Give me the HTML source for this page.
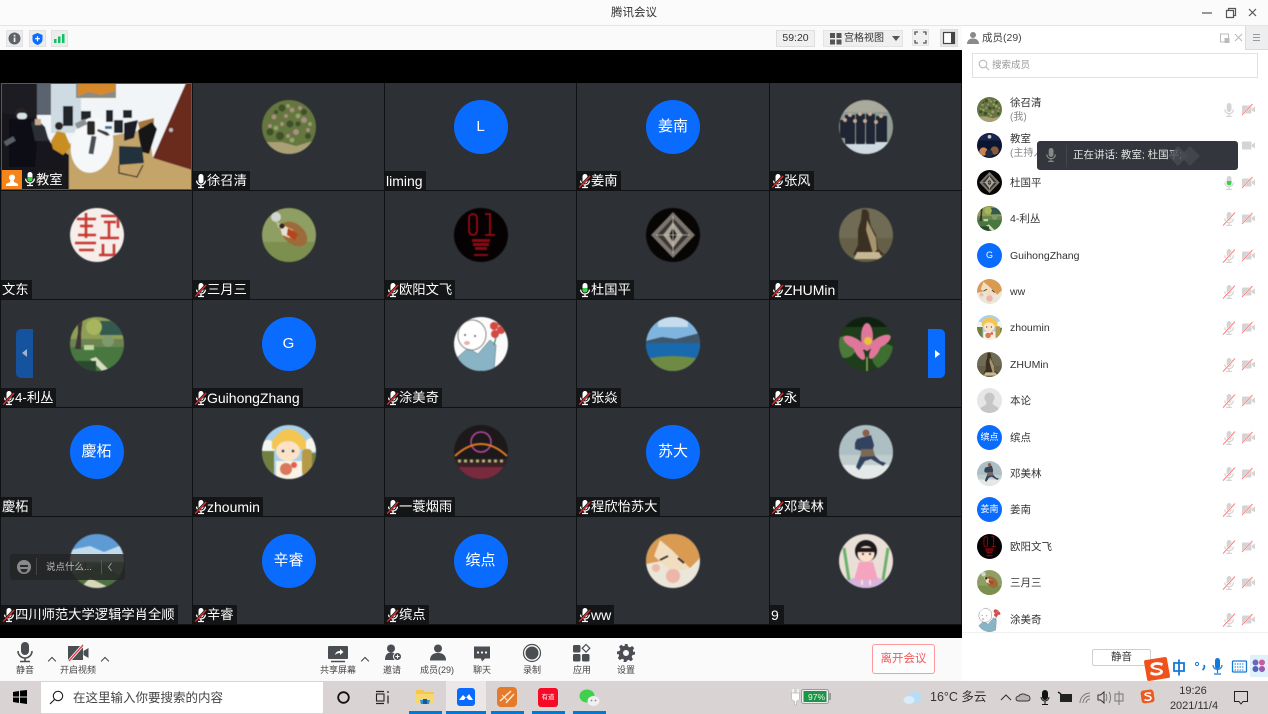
<!DOCTYPE html>
<html lang="zh"><head><meta charset="utf-8"><title>腾讯会议</title>
<style>
*{box-sizing:border-box;margin:0;padding:0}
html,body{width:1268px;height:714px;overflow:hidden;background:#fff}
body{position:relative;font-family:"Liberation Sans","Noto Sans CJK SC",sans-serif;color:#333}
.abs,.c,.l,.av,.t,.r,.pav,.ic{position:absolute}
.c{background:#2d3034;overflow:hidden}
.av{width:54px;height:54px;border-radius:50%;overflow:hidden;left:50%;margin-left:-27px;top:17px;display:block}
svg.av{filter:blur(.4px)}
svg.pav{filter:blur(.25px)}
.bl{background:#0a6cff;color:#fff;font-size:15px;line-height:54px;text-align:center}
.l{left:0;bottom:0;height:19px;background:#141517;color:#fff;font-size:13.3px;line-height:20px;white-space:nowrap;padding:0 3px 0 14px}
.l.e{font-size:14px}
.l.n{padding-left:1px}
.l svg{position:absolute;left:1px;top:2px;width:14px;height:16px}
.t{text-align:center;font-size:9px;color:#444;white-space:nowrap;line-height:12px;top:664px;width:60px}
.chev{position:absolute;width:6px;height:6px;border-left:1.3px solid #444;border-top:1.3px solid #444;transform:rotate(45deg);top:658px}
.r{left:962px;width:306px;height:36px}
.pav{left:15px;top:6px;width:25px;height:25px;border-radius:50%;overflow:hidden;display:block}
.pbl{background:#0a6cff;color:#fff;font-size:9px;line-height:25px;text-align:center}
.nm{position:absolute;left:48px;top:12px;font-size:10.5px;line-height:14px;color:#333;white-space:nowrap}
.sub{position:absolute;left:48px;top:20px;font-size:10px;line-height:14px;color:#888;white-space:nowrap}
.ic{width:14px;height:16px}
.pm{left:260px;top:11px}.pc{left:279px;top:12px;width:15px;height:13px}
.und{position:absolute;top:711px;height:3px;background:#0078d4}
</style></head><body>
<svg width="0" height="0" style="position:absolute">
<defs>
<symbol id="m" viewBox="0 0 14 16"><rect x="4.5" y="1" width="5" height="9.5" rx="2.5" fill="#fff"/><path d="M2.6 7.6a4.4 4.4 0 0 0 8.8 0M7 12v2.2M4 14.5h6" stroke="#fff" stroke-width="1.3" fill="none"/><path d="M1 14.5L12.5 2.5" stroke="#141517" stroke-width="2.4"/><path d="M1.2 14.5L12.2 3" stroke="#e02b2b" stroke-width="1.3"/></symbol>
<symbol id="mg" viewBox="0 0 14 16"><rect x="4.5" y="1" width="5" height="9.5" rx="2.5" fill="#fff"/><path d="M4.5 6h5v2a2.5 2.5 0 0 1-5 0z" fill="#3bd24a"/><path d="M2.6 7.6a4.4 4.4 0 0 0 8.8 0M7 12v2.2M4 14.5h6" stroke="#fff" stroke-width="1.3" fill="none"/></symbol>
<symbol id="mw" viewBox="0 0 14 16"><rect x="4.5" y="1" width="5" height="9.5" rx="2.5" fill="#fff"/><path d="M2.6 7.6a4.4 4.4 0 0 0 8.8 0M7 12v2.2M4 14.5h6" stroke="#fff" stroke-width="1.3" fill="none"/></symbol>
<symbol id="pm" viewBox="0 0 14 16"><rect x="4.7" y="1" width="4.8" height="9" rx="2.4" fill="#d4d4d4"/><path d="M2.8 7.4a4.3 4.3 0 0 0 8.6 0M7 12v2M4.2 14.4h5.6" stroke="#d4d4d4" stroke-width="1.2" fill="none"/><path d="M1 14.6L13 1.5" stroke="#fff" stroke-width="2"/><path d="M1 14.6L13 1.5" stroke="#ff7f7f" stroke-width="1"/></symbol>
<symbol id="pm0" viewBox="0 0 14 16"><rect x="4.7" y="1" width="4.8" height="9" rx="2.4" fill="#d4d4d4"/><path d="M2.8 7.4a4.3 4.3 0 0 0 8.6 0M7 12v2M4.2 14.4h5.6" stroke="#d4d4d4" stroke-width="1.2" fill="none"/></symbol>
<symbol id="pmg" viewBox="0 0 14 16"><rect x="4.7" y="1" width="4.8" height="9" rx="2.4" fill="#d4d4d4"/><path d="M4.7 6h4.8v2a2.4 2.4 0 0 1-4.8 0z" fill="#3cd04a"/><path d="M2.8 7.4a4.3 4.3 0 0 0 8.6 0M7 12v2M4.2 14.4h5.6" stroke="#d4d4d4" stroke-width="1.2" fill="none"/></symbol>
<symbol id="pc" viewBox="0 0 15 13"><rect x="1" y="2.5" width="9.5" height="8" rx="1" fill="#d4d4d4"/><path d="M11 5.5l3-2v6l-3-2z" fill="#d4d4d4"/><path d="M1 12L11.5 1" stroke="#fff" stroke-width="1.8"/><path d="M1 12L11.5 1" stroke="#ff7f7f" stroke-width="1"/></symbol>
<symbol id="pc0" viewBox="0 0 15 13"><rect x="1" y="2.5" width="9.5" height="8" rx="1" fill="#d4d4d4"/><path d="M11 5.5l3-2v6l-3-2z" fill="#d4d4d4"/></symbol>

<symbol id="a-xu" viewBox="0 0 54 54"><rect width="54" height="54" fill="#66763f"/><path d="M0 42l20 0 14 4 20-6v14H0z" fill="#a9a076"/><g fill="#a98e84"><circle cx="30" cy="10" r="2.500"/><circle cx="42" cy="20" r="3"/><circle cx="20" cy="24" r="2"/><circle cx="34" cy="32" r="3"/><circle cx="12" cy="17" r="2.500"/><circle cx="24" cy="16" r="2"/><circle cx="46" cy="30" r="2"/><circle cx="26" cy="36" r="2"/><circle cx="8" cy="26" r="2"/><circle cx="38" cy="8" r="2"/></g><g fill="#3f5129"><circle cx="20" cy="8" r="3.500"/><circle cx="8" cy="32" r="3.500"/><circle cx="28" cy="24" r="3.500"/><circle cx="46" cy="36" r="3"/><circle cx="18" cy="36" r="4"/><circle cx="42" cy="12" r="3"/><circle cx="36" cy="24" r="2.500"/><circle cx="14" cy="12" r="2"/></g><g fill="#8fa56a"><circle cx="36" cy="16" r="2.500"/><circle cx="14" cy="28" r="2.500"/><circle cx="30" cy="40" r="2.500"/><circle cx="26" cy="6" r="2"/><circle cx="48" cy="24" r="2"/></g></symbol>
<symbol id="a-zf" viewBox="0 0 54 54"><rect width="54" height="54" fill="#8f9a93"/><rect y="0" width="54" height="12" fill="#a9a99c"/><rect y="42" width="54" height="12" fill="#cfd9e2"/><g fill="#1f2532"><rect x="6" y="15" width="10" height="29"/><rect x="17" y="14" width="9" height="30"/><rect x="27" y="14" width="9" height="30"/><rect x="37" y="16" width="11" height="26"/><rect x="1" y="20" width="5" height="18"/></g><g fill="#c9a993"><circle cx="11" cy="15" r="2"/><circle cx="21" cy="14" r="2"/><circle cx="31" cy="14" r="2"/><circle cx="42" cy="16" r="2"/><circle cx="16" cy="21" r="2"/><circle cx="26" cy="21" r="2"/><circle cx="37" cy="22" r="2"/><circle cx="6" cy="20" r="2"/></g></symbol>
<symbol id="a-wd" viewBox="0 0 54 54"><rect width="54" height="54" fill="#f5eeea"/><g stroke="#c63a32" stroke-width="2.600" fill="none"><path d="M7 11H26M10 18H23M16 5V30M8 27H26M5 35H26M9 42H24"/><path d="M31 8H48V20M34 14H46M39 14V30M30 30H49M33 36V48M44 36V48M29 47H50"/></g></symbol>
<symbol id="a-sy" viewBox="0 0 54 54"><rect width="54" height="54" fill="#8f9e62"/><rect y="34" width="54" height="20" fill="#7d8f4f"/><circle cx="14" cy="9" r="5" fill="#cfd6cf"/><path d="M15 14l2 6" stroke="#d8d8c8"/><ellipse cx="32" cy="26" rx="15" ry="10" transform="rotate(40 32 26)" fill="#9d6a3a"/><path d="M17 15l14 7-3 8-8-3z" fill="#e8e0d4"/><path d="M26 20l10 6-3 6-8-5z" fill="#b8441c"/><circle cx="20" cy="18" r="2.500" fill="#31241c"/></symbol>
<symbol id="a-oy" viewBox="0 0 54 54"><rect width="54" height="54" fill="#060203"/><g fill="none" stroke="#aa0b14" stroke-width="1.600"><rect x="15" y="6" width="8" height="21" rx="4"/><path d="M31 6h5v21M31 27h10"/></g><g fill="#8b0a12"><rect x="18" y="31" width="18" height="3"/><rect x="19" y="35" width="16" height="3"/><rect x="21" y="39" width="12" height="3"/><rect x="20" y="46" width="14" height="2"/></g></symbol>
<symbol id="a-du" viewBox="0 0 54 54"><rect width="54" height="54" fill="#070605"/><path d="M27 4L49 27 27 50 5 27z" fill="#7b756d"/><path d="M27 10L43 27 27 44 11 27z" fill="#3a3632"/><path d="M27 14L37 27 27 40 17 27z" fill="#a8a297"/><path d="M27 20L31 27 27 34 23 27z" fill="#1e1c1a"/><path d="M10 27H44M27 8V46" stroke="#c9c3b7" stroke-width=".8"/></symbol>
<symbol id="a-zh" viewBox="0 0 54 54"><rect width="54" height="54" fill="#706b55"/><rect x="0" y="30" width="54" height="24" fill="#655f47"/><path d="M23 2c4-2 8 1 7 7l2 9 5 9 2 14 7 6H14l5-10 0-15 3-10z" fill="#3b3022"/><path d="M28 12l4 8 5 10 1 12-4 4-4-14-3-10z" fill="#a5946e"/><path d="M18 44h22l4 7H15z" fill="#c7b893"/></symbol>
<symbol id="a-li" viewBox="0 0 54 54"><rect width="54" height="54" fill="#6b8450"/><rect width="54" height="22" fill="#8e9e55"/><rect x="30" y="4" width="24" height="14" fill="#345a50"/><rect y="30" width="54" height="24" fill="#48783f"/><path d="M8 0l5 0-2 16 0 16-6 0 3-16z" fill="#3f3437"/><circle cx="24" cy="10" r="8" fill="#a7b65c"/><circle cx="38" cy="24" r="6" fill="#7f9a6d"/><path d="M26 40l14 14h-8L20 42z" fill="#d6dcc0"/><rect x="14" y="28" width="10" height="5" fill="#bcd59b"/><rect x="0" y="44" width="26" height="10" fill="#2a4a30"/></symbol>
<symbol id="a-tu" viewBox="0 0 54 54"><rect width="54" height="54" fill="#fbfbfb"/><path d="M4 40L14 31l10 6 12-14 6 5-2 26H6z" fill="#89b4c6" stroke="#4d6470" stroke-width=".5"/><ellipse cx="18" cy="18" rx="14" ry="15" transform="rotate(12 18 18)" fill="#fff" stroke="#6b6b6b" stroke-width=".8"/><ellipse cx="13" cy="26" rx="3" ry="2" fill="#e6b3ad"/><circle cx="11" cy="18" r=".9" fill="#333"/><circle cx="21" cy="19" r=".9" fill="#333"/><g fill="#d34a43"><circle cx="40" cy="9" r="4"/><circle cx="47" cy="13" r="4"/><circle cx="41" cy="17" r="4"/><circle cx="46" cy="6" r="3"/></g><path d="M42 20l-2 8" stroke="#52785c" stroke-width="1.2"/></symbol>
<symbol id="a-zy" viewBox="0 0 54 54"><rect width="54" height="54" fill="#7fb4df"/><path d="M0 24l16-4 14 2 24-6v10H0z" fill="#3d566c"/><rect y="26" width="54" height="16" fill="#1869ad"/><path d="M0 42q27-6 54 0v12H0z" fill="#6f8a42"/><path d="M12 0h30v10H12z" fill="#d6e6f0" opacity=".8"/></symbol>
<symbol id="a-yo" viewBox="0 0 54 54"><rect width="54" height="54" fill="#1e3d1a"/><path d="M0 0h54v10H0z" fill="#0e2110"/><circle cx="6" cy="30" r="11" fill="#4c7a3a"/><circle cx="46" cy="40" r="13" fill="#3e6e30"/><path d="M28 40v14" stroke="#8fae62" stroke-width="1.5"/><g fill="#e0779a"><ellipse cx="28" cy="20" rx="6" ry="14"/><ellipse cx="15" cy="26" rx="5" ry="12" transform="rotate(-60 15 26)"/><ellipse cx="41" cy="25" rx="5" ry="12" transform="rotate(60 41 25)"/><ellipse cx="20" cy="34" rx="4" ry="10" transform="rotate(-30 20 34)"/><ellipse cx="36" cy="33" rx="4" ry="10" transform="rotate(30 36 33)"/></g><circle cx="29" cy="24" r="4" fill="#e9c13b"/></symbol>
<symbol id="a-zm" viewBox="0 0 54 54"><rect width="54" height="54" fill="#a9d0ea"/><circle cx="6" cy="22" r="7" fill="#f5f5ef"/><circle cx="50" cy="20" r="7" fill="#f5f5ef"/><path d="M0 26h12v28H0zM42 28h12v26H42z" fill="#72803f"/><rect x="40" y="24" width="10" height="26" rx="4" fill="#b69a45"/><path d="M10 16Q27-8 44 16v8H10z" fill="#f4c651"/><ellipse cx="26" cy="26" rx="12" ry="10" fill="#fbe2c8"/><circle cx="21" cy="26" r="1.3" fill="#333"/><circle cx="31" cy="26" r="1.3" fill="#333"/><path d="M14 36h26v18H14z" fill="#f9f3e4"/><circle cx="24" cy="44" r="6" fill="#d9795c"/><circle cx="32" cy="40" r="3" fill="#e85b51"/></symbol>
<symbol id="a-ys" viewBox="0 0 54 54"><rect width="54" height="54" fill="#1d191a"/><rect y="34" width="54" height="20" fill="#3b2026"/><rect y="42" width="54" height="12" fill="#7a2a3e"/><circle cx="27" cy="17" r="10" fill="none" stroke="#b54aa3" stroke-width="1.5"/><path d="M1 31Q27 7 53 31" fill="none" stroke="#de7a25" stroke-width="2"/><path d="M4 36h46" stroke="#a9b97a" stroke-width="3" stroke-dasharray="3 3"/></symbol>
<symbol id="a-dm" viewBox="0 0 54 54"><rect width="54" height="54" fill="#aebfc4"/><rect y="30" width="54" height="24" fill="#c1cdcd"/><rect y="40" width="54" height="14" fill="#e4e8e6"/><path d="M18 14l14-4 3 10-2 8 8 8 6 2-3 3-12-7-6 2-6 9-3-3 4-10 2-6-7-2 0-6z" fill="#33425f"/><circle cx="27" cy="8" r="3.5" fill="#8a5f45"/><path d="M22 24l12 0 2 7-14 1z" fill="#7a6a55"/></symbol>
<symbol id="a-sc" viewBox="0 0 54 54"><rect width="54" height="54" fill="#5e9ad4"/><path d="M0 16l20-4 14 6 20-8v14H0z" fill="#c0dcec"/><rect y="22" width="54" height="8" fill="#cbd8d6"/><rect y="28" width="54" height="26" fill="#6d8a5d"/><path d="M0 42L30 30l24 14v10H0z" fill="#4f7042"/><path d="M20 44L40 54H10z" fill="#d8d8b8"/><rect x="14" y="28" width="2" height="14" fill="#704444"/></symbol>
<symbol id="a-ww" viewBox="0 0 54 54"><rect width="54" height="54" fill="#eae6da"/><path d="M0 0h54v24L44 34 20 26 0 30z" fill="#d99a52"/><path d="M14 6l12 10 18 18-18 4L8 22z" fill="#f1ddc0"/><path d="M14 26l8-4M32 24l6 5" stroke="#3a2a20" stroke-width="1.8"/><circle cx="27" cy="42" r="7" fill="#eeb6a8"/><circle cx="10" cy="34" r="4" fill="#efbaa7"/><path d="M0 38l14 16H0z" fill="#d8d5c6"/></symbol>
<symbol id="a-9" viewBox="0 0 54 54"><rect width="54" height="54" fill="#eadfd7"/><ellipse cx="27" cy="50" rx="22" ry="7" fill="#d7b5e0"/><path d="M5 14l5 32M49 14l-5 32" stroke="#6db26c" stroke-width="3"/><path d="M20 28h14l5 18H15z" fill="#f4a4be"/><circle cx="27" cy="17" r="11" fill="#1e1a1c"/><ellipse cx="27" cy="20" rx="8.5" ry="8" fill="#fbe0cd"/><path d="M18 14h18v4H18z" fill="#1e1a1c"/><circle cx="24" cy="20" r="1" fill="#222"/><circle cx="31" cy="20" r="1" fill="#222"/><path d="M23 46v5M31 46v5" stroke="#fbe0cd" stroke-width="2"/></symbol>
<symbol id="a-js" viewBox="0 0 54 54"><rect width="54" height="54" fill="#0b1530"/><rect y="0" width="54" height="16" fill="#17264d"/><circle cx="27" cy="8" r="4" fill="#c9c9c0"/><circle cx="14" cy="40" r="9" fill="#c98550"/><circle cx="38" cy="38" r="9" fill="#8a5a38"/><circle cx="26" cy="44" r="8" fill="#222a44"/></symbol>
<symbol id="a-bl" viewBox="0 0 54 54"><rect width="54" height="54" fill="#e6e6e6"/><circle cx="27" cy="21" r="11" fill="#c6c6c6"/><path d="M20 30h14v5l12 8v11H8V43l12-8z" fill="#c6c6c6"/></symbol>
<filter id="sf"><feGaussianBlur stdDeviation=".5"/></filter>
</defs></svg>

<!-- title bar -->
<div class="abs" style="left:0;top:0;width:1268px;height:26px;background:#fbfbfb;border-bottom:1px solid #e4e4e4"></div>
<div class="abs" style="left:534px;top:6px;width:200px;text-align:center;font-size:11.5px;line-height:15px;color:#333">腾讯会议</div>
<svg class="abs" style="left:1198px;top:6px" width="66" height="14"><path d="M4 7h10" stroke="#555" stroke-width="1.2"/><path d="M28.5 4.500h7v7h-7zM30.500 4.500v-2h7v7h-2" fill="none" stroke="#555" stroke-width="1.2"/><path d="M51 3l7 7M58 3l-7 7" stroke="#555" stroke-width="1.2"/></svg>

<!-- top tool row -->
<div class="abs" style="left:0;top:26px;width:962px;height:24px;background:#fafafa"></div>
<div class="abs" style="left:6px;top:30px;width:17px;height:17px;background:#ececec;border:1px solid #e2e2e2"></div>
<div class="abs" style="left:29px;top:30px;width:17px;height:17px;background:#ececec;border:1px solid #e2e2e2"></div>
<div class="abs" style="left:51px;top:30px;width:17px;height:17px;background:#ececec;border:1px solid #e2e2e2"></div>
<svg class="abs" style="left:6px;top:30px" width="64" height="17"><circle cx="8.500" cy="8.500" r="6" fill="#5f6266"/><rect x="7.700" y="7.500" width="1.700" height="4.500" fill="#eee"/><rect x="7.700" y="4.800" width="1.700" height="1.700" fill="#eee"/><path d="M31.500 3l5 2v4.500c0 3-2.500 4.500-5 5.500-2.500-1-5-2.500-5-5.500V5z" fill="#0a6cff"/><path d="M29 8.700h5M31.500 6.200v5" stroke="#fff" stroke-width="1.200"/><g fill="#0fc262"><rect x="48" y="9" width="2.500" height="4"/><rect x="52" y="6.500" width="2.500" height="6.500"/><rect x="56" y="4" width="2.500" height="9"/></g></svg>
<div class="abs" style="left:776px;top:30px;width:39px;height:17px;background:#f0f0f0;border:1px solid #dedede;font-size:10.500px;line-height:15px;text-align:center;color:#333">59:20</div>
<div class="abs" style="left:823px;top:30px;width:80px;height:17px;background:#efefef;border:1px solid #e4e4e4"></div>
<svg class="abs" style="left:830px;top:32px" width="13" height="13"><g fill="#555"><rect x="0" y="1" width="5" height="5"/><rect x="6.500" y="1" width="5" height="5"/><rect x="0" y="7.500" width="5" height="5"/><rect x="6.500" y="7.500" width="5" height="5"/></g></svg>
<div class="abs" style="left:844px;top:30px;font-size:10px;line-height:17px;color:#333">宫格视图</div>
<div class="abs" style="left:892px;top:36px;width:0;height:0;border:4px solid transparent;border-top:5px solid #555"></div>
<div class="abs" style="left:912px;top:29px;width:17px;height:17px;background:#f0f0f0;border:1px solid #e4e4e4"></div>
<svg class="abs" style="left:912px;top:29px" width="17" height="17"><path d="M3 6V3h3M11 3h3v3M14 11v3h-3M6 14H3v-3" fill="none" stroke="#555" stroke-width="1.300"/></svg>
<div class="abs" style="left:940px;top:29px;width:18px;height:18px;background:#e6e6e6;border:1px solid #ddd"></div>
<svg class="abs" style="left:940px;top:29px" width="18" height="18"><rect x="3.500" y="3.500" width="11" height="11" fill="#fff" stroke="#444" stroke-width="1.200"/><rect x="11" y="3.500" width="3.500" height="11" fill="#444"/></svg>

<!-- video area -->
<div class="abs" style="left:0;top:50px;width:962px;height:588px;background:#000"></div>
<div class="abs" style="left:0;top:83px;width:962px;height:542px;background:#101113"></div>

<!-- row 1 -->
<div class="c" style="left:1px;top:83px;width:191px;height:107px;border:1px solid #12823f">
<svg class="abs" style="left:-1px;top:-1px" width="191" height="107" viewBox="0 0 191 107"><g filter="url(#sf)">
<rect width="191" height="107" fill="#f2f5f7"/>
<rect x="50" y="0" width="30" height="50" fill="#cfdbe2"/>
<rect x="36" y="0" width="14" height="32" fill="#5b6470"/>
<rect x="0" y="0" width="36" height="50" fill="#1a1a20"/>
<rect x="75" y="0" width="40" height="15" fill="#8b8b80"/><path d="M77 0h37v8l-14 4-12-3-11 4z" fill="#d6892c"/>
<path d="M60 62L147 46l5 29 39 12v20H60z" fill="#c5a469"/>
<path d="M137 39l16-4 0 15-13 4z" fill="#a8763e"/>
<path d="M191 0v87l-39-12 33-75z" fill="#6a2a1a"/>
<circle cx="170" cy="47" r="2" fill="#bbb"/>
<path d="M0 30l36 5 14 25 18 12v35H0z" fill="#15161b"/>
<g fill="#20252c"><rect x="80" y="28" width="10" height="9"/><rect x="105" y="27" width="7" height="12"/><rect x="122" y="27" width="9" height="8"/><rect x="62" y="23" width="10" height="20"/><rect x="113" y="37" width="9" height="13"/></g>
<path d="M123 40l14-3-4 18-10 3z" fill="#1a1f25"/>
<path d="M137 47l14-8 5 7-8 25-7-2-3-14z" fill="#141619"/>
<path d="M118 63l23 1 2 16-25 2z" fill="#24303c"/>
<path d="M118 82l0 8 18 4 6-12" stroke="#222" stroke-width="1.200" fill="none"/>
<ellipse cx="91" cy="62" rx="21" ry="28" transform="rotate(12 91 62)" fill="#f5f7f8"/>
<rect x="86" y="38" width="8" height="14" rx="2" fill="#2c2c2c"/><path d="M96 48l10 5 3-1-3-3-9-3z" fill="#3a3b3c"/><rect x="89" y="53" width="5" height="18" transform="rotate(10 91 62)" fill="#4a4f54"/><rect x="75" y="38" width="11" height="6" fill="#8a9194" transform="rotate(-25 80 42)"/><rect x="104" y="43" width="7" height="3" fill="#3e6ea0"/>
<path d="M8 36h22l6 24-2 24H8z" fill="#0f0f12"/><circle cx="20" cy="31" r="6" fill="#2a2220"/><rect x="16" y="30" width="10" height="6" rx="3" fill="#d6e3e9"/>
<path d="M30 40l6-4 8 8 4 14-14 0z" fill="#2b2e35"/><rect x="34" y="36" width="6" height="6" fill="#c8a98f"/>
<path d="M50 58l6-10 8 2 6 14-8 8-10-6z" fill="#c98e24"/><circle cx="58" cy="43" r="4" fill="#2c2522"/>
<rect x="3" y="56" width="11" height="5" fill="#5a6066" transform="rotate(-30 8 58)"/>
</g></svg>
<div class="abs" style="left:0;bottom:0;width:20px;height:19px;background:#f6841c"></div>
<svg class="abs" style="left:3px;bottom:2px" width="14" height="14"><circle cx="7" cy="4.500" r="3" fill="#fff"/><path d="M5 7.500h4v1.500l4 2v2H1v-2l4-2z" fill="#fff"/></svg>
<div class="abs" style="left:20px;bottom:0;height:19px;width:44px;background:#191a1c;color:#fff;font-size:13.300px;line-height:19px;padding-left:14px;white-space:nowrap">教室</div>
<svg class="abs" style="left:21px;bottom:2px" width="14" height="16"><use href="#mg"/></svg>
</div>
<div class="c" style="left:193px;top:83px;width:191px;height:107px"><svg class="av" viewBox="0 0 54 54"><use href="#a-xu"/></svg><div class="l"><svg><use href="#mw"/></svg>徐召清</div></div>
<div class="c" style="left:385px;top:83px;width:191px;height:107px"><div class="av bl">L</div><div class="l n e">liming</div></div>
<div class="c" style="left:577px;top:83px;width:192px;height:107px"><div class="av bl">姜南</div><div class="l"><svg><use href="#m"/></svg>姜南</div></div>
<div class="c" style="left:770px;top:83px;width:191px;height:107px"><svg class="av" viewBox="0 0 54 54"><use href="#a-zf"/></svg><div class="l"><svg><use href="#m"/></svg>张风</div></div>
<!-- row 2 -->
<div class="c" style="left:1px;top:191px;width:191px;height:108px"><svg class="av" viewBox="0 0 54 54"><use href="#a-wd"/></svg><div class="l n">文东</div></div>
<div class="c" style="left:193px;top:191px;width:191px;height:108px"><svg class="av" viewBox="0 0 54 54"><use href="#a-sy"/></svg><div class="l"><svg><use href="#m"/></svg>三月三</div></div>
<div class="c" style="left:385px;top:191px;width:191px;height:108px"><svg class="av" viewBox="0 0 54 54"><use href="#a-oy"/></svg><div class="l"><svg><use href="#m"/></svg>欧阳文飞</div></div>
<div class="c" style="left:577px;top:191px;width:192px;height:108px"><svg class="av" viewBox="0 0 54 54"><use href="#a-du"/></svg><div class="l"><svg><use href="#mg"/></svg>杜国平</div></div>
<div class="c" style="left:770px;top:191px;width:191px;height:108px"><svg class="av" viewBox="0 0 54 54"><use href="#a-zh"/></svg><div class="l e"><svg><use href="#m"/></svg>ZHUMin</div></div>
<!-- row 3 -->
<div class="c" style="left:1px;top:300px;width:191px;height:107px"><svg class="av" viewBox="0 0 54 54"><use href="#a-li"/></svg><div class="l"><svg><use href="#m"/></svg>4-利丛</div></div>
<div class="c" style="left:193px;top:300px;width:191px;height:107px"><div class="av bl">G</div><div class="l e"><svg><use href="#m"/></svg>GuihongZhang</div></div>
<div class="c" style="left:385px;top:300px;width:191px;height:107px"><svg class="av" viewBox="0 0 54 54"><use href="#a-tu"/></svg><div class="l"><svg><use href="#m"/></svg>涂美奇</div></div>
<div class="c" style="left:577px;top:300px;width:192px;height:107px"><svg class="av" viewBox="0 0 54 54"><use href="#a-zy"/></svg><div class="l"><svg><use href="#m"/></svg>张焱</div></div>
<div class="c" style="left:770px;top:300px;width:191px;height:107px"><svg class="av" viewBox="0 0 54 54"><use href="#a-yo"/></svg><div class="l"><svg><use href="#m"/></svg>永</div></div>
<!-- row 4 -->
<div class="c" style="left:1px;top:408px;width:191px;height:108px"><div class="av bl">慶柘</div><div class="l n">慶柘</div></div>
<div class="c" style="left:193px;top:408px;width:191px;height:108px"><svg class="av" viewBox="0 0 54 54"><use href="#a-zm"/></svg><div class="l e"><svg><use href="#m"/></svg>zhoumin</div></div>
<div class="c" style="left:385px;top:408px;width:191px;height:108px"><svg class="av" viewBox="0 0 54 54"><use href="#a-ys"/></svg><div class="l"><svg><use href="#m"/></svg>一蓑烟雨</div></div>
<div class="c" style="left:577px;top:408px;width:192px;height:108px"><div class="av bl">苏大</div><div class="l"><svg><use href="#m"/></svg>程欣怡苏大</div></div>
<div class="c" style="left:770px;top:408px;width:191px;height:108px"><svg class="av" viewBox="0 0 54 54"><use href="#a-dm"/></svg><div class="l"><svg><use href="#m"/></svg>邓美林</div></div>
<!-- row 5 -->
<div class="c" style="left:1px;top:517px;width:191px;height:107px"><svg class="av" viewBox="0 0 54 54"><use href="#a-sc"/></svg><div class="l"><svg><use href="#m"/></svg>四川师范大学逻辑学肖全顺</div></div>
<div class="c" style="left:193px;top:517px;width:191px;height:107px"><div class="av bl">辛睿</div><div class="l"><svg><use href="#m"/></svg>辛睿</div></div>
<div class="c" style="left:385px;top:517px;width:191px;height:107px"><div class="av bl">缤点</div><div class="l"><svg><use href="#m"/></svg>缤点</div></div>
<div class="c" style="left:577px;top:517px;width:192px;height:107px"><svg class="av" viewBox="0 0 54 54"><use href="#a-ww"/></svg><div class="l e"><svg><use href="#m"/></svg>ww</div></div>
<div class="c" style="left:770px;top:517px;width:191px;height:107px"><svg class="av" viewBox="0 0 54 54"><use href="#a-9"/></svg><div class="l n e" style="padding-right:5px">9</div></div>

<!-- nav arrows -->
<div class="abs" style="left:16px;top:329px;width:17px;height:49px;background:#15539f;border-radius:5px 0 0 5px"></div>
<div class="abs" style="left:22px;top:349px;width:0;height:0;border:4px solid transparent;border-right:5px solid #9fb4cf;border-left:0"></div>
<div class="abs" style="left:928px;top:329px;width:17px;height:49px;background:#0a6cff;border-radius:0 5px 5px 0"></div>
<div class="abs" style="left:935px;top:350px;width:0;height:0;border:4px solid transparent;border-left:5px solid #fff;border-right:0"></div>

<!-- chat bubble -->
<div class="abs" style="left:10px;top:554px;width:115px;height:26px;background:rgba(35,36,38,.82);border-radius:3px"></div>
<svg class="abs" style="left:16px;top:559px" width="16" height="16"><circle cx="8" cy="8" r="7" fill="#8a8a8a"/><rect x="4" y="6" width="8" height="2" fill="#2b2c2e"/><path d="M4.500 10h7a3.500 3.500 0 0 1-7 0z" fill="#2b2c2e"/></svg>
<div class="abs" style="left:36px;top:558px;width:1px;height:17px;background:#444"></div>
<div class="abs" style="left:46px;top:560px;font-size:9.500px;line-height:15px;color:#bfbfbf">说点什么...</div>
<div class="abs" style="left:101px;top:560px;width:1px;height:14px;background:#555"></div>
<svg class="abs" style="left:107px;top:562px" width="6" height="10"><path d="M4.500 1L1.500 5l3 4" stroke="#999" fill="none"/></svg>

<!-- bottom toolbar -->
<div class="abs" style="left:0;top:638px;width:962px;height:43px;background:#fafafa"></div>
<svg class="abs" style="left:15px;top:641px" width="20" height="22"><rect x="6" y="1" width="8" height="13" rx="4" fill="#4a4d52"/><path d="M3 10a7 7 0 0 0 14 0M10 17v3M5 20.500h10" stroke="#4a4d52" stroke-width="1.600" fill="none"/></svg>
<div class="t" style="left:-5px">静音</div>
<div class="chev" style="left:49px"></div>
<svg class="abs" style="left:67px;top:644px" width="23" height="18"><path d="M1 2h15v14H1z" fill="#4a4d52"/><path d="M16.500 7l5-3v10l-5-3z" fill="#4a4d52"/><path d="M2 17L16 1" stroke="#fafafa" stroke-width="3"/><path d="M2 17L16 1" stroke="#e8434a" stroke-width="1.400"/></svg>
<div class="t" style="left:48px">开启视频</div>
<div class="chev" style="left:102px"></div>
<svg class="abs" style="left:327px;top:645px" width="22" height="19"><rect x="1" y="1" width="20" height="13" rx="1" fill="#4a4d52"/><path d="M4 16.500h14" stroke="#4a4d52" stroke-width="1.500"/><path d="M8 10c.5-2.500 2-4 5-4V4l3.500 3-3.500 3V8c-2 0-3.500.5-5 2z" fill="#fff"/></svg>
<div class="t" style="left:308px">共享屏幕</div>
<div class="chev" style="left:362px"></div>
<svg class="abs" style="left:383px;top:644px" width="20" height="18"><circle cx="8" cy="4.500" r="4" fill="#4a4d52"/><path d="M2 16c0-6 3-7.500 6-7.500 3 0 5 1.500 5.500 3.500v4z" fill="#4a4d52"/><circle cx="14.500" cy="12.500" r="4" fill="#4a4d52" stroke="#fafafa"/><path d="M12.500 12.500h4M14.500 10.500v4" stroke="#fff"/></svg>
<div class="t" style="left:362px">邀请</div>
<svg class="abs" style="left:428px;top:644px" width="20" height="18"><circle cx="10" cy="4.500" r="4" fill="#4a4d52"/><path d="M2 16.500c0-6 4-7.500 8-7.500s8 1.500 8 7.500z" fill="#4a4d52"/></svg>
<div class="t" style="left:407px">成员(29)</div>
<svg class="abs" style="left:473px;top:645px" width="18" height="18"><path d="M1 1.500h16v12h-5l-3 3-1-3H1z" fill="#4a4d52"/><g fill="#fff"><circle cx="5" cy="7.500" r="1.100"/><circle cx="9" cy="7.500" r="1.100"/><circle cx="13" cy="7.500" r="1.100"/></g></svg>
<div class="t" style="left:452px">聊天</div>
<svg class="abs" style="left:522px;top:643px" width="20" height="20"><circle cx="10" cy="10" r="8.500" fill="none" stroke="#4a4d52" stroke-width="1.200"/><circle cx="10" cy="10" r="6.500" fill="#4a4d52"/></svg>
<div class="t" style="left:502px">录制</div>
<svg class="abs" style="left:572px;top:643px" width="20" height="20"><g fill="#4a4d52"><rect x="1" y="2" width="7.500" height="7.500" rx="1.500"/><rect x="1" y="11" width="7.500" height="7.500" rx="1.500"/><rect x="10" y="11" width="7.500" height="7.500" rx="1.500"/></g><path d="M14 1.500l3.800 3.800L14 9.100l-3.800-3.800z" fill="none" stroke="#4a4d52" stroke-width="1.200"/></svg>
<div class="t" style="left:552px">应用</div>
<svg class="abs" style="left:617px;top:644px" width="18" height="18" viewBox="0 0 18 18"><path d="M7.500 0h3l.5 2.500 2 .9 2.200-1.400 2 2.100-1.400 2.200.9 2L18 7.500v3l-2.500.5-.9 2 1.400 2.200-2.100 2-2.200-1.400-2 .9-.5 2.500h-3L7 15.600l-2-.9-2.200 1.400-2-2.100 1.400-2.200-.9-2L0 10.500v-3l2.500-.5.900-2L2 2.800l2.100-2 2.200 1.400 2-.9z" fill="#4a4d52"/><circle cx="9" cy="9" r="3" fill="#fafafa"/></svg>
<div class="t" style="left:596px">设置</div>
<div class="abs" style="left:872px;top:644px;width:63px;height:30px;border:1px solid #ff9a9a;border-radius:3px;color:#f4595c;font-size:11.500px;line-height:28px;text-align:center;background:#fdfdfd">离开会议</div>

<!-- right panel -->
<div class="abs" style="left:962px;top:26px;width:306px;height:655px;background:#fff"></div>
<svg class="abs" style="left:966px;top:31px" width="14" height="14"><circle cx="7" cy="4" r="3" fill="#8a8a8a"/><path d="M1 13c0-4 3-5.500 6-5.500s6 1.500 6 5.500z" fill="#8a8a8a"/></svg>
<div class="abs" style="left:982px;top:31px;font-size:10.500px;line-height:14px;color:#444">成员(29)</div>
<svg class="abs" style="left:1219px;top:32px" width="26" height="12"><path d="M1.500 2h8v8h-8z" fill="none" stroke="#bbb"/><path d="M5.500 6h5v5h-5z" fill="#bbb"/><path d="M16 2l7 7M23 2l-7 7" stroke="#bbb" stroke-width="1.100"/></svg>
<div class="abs" style="left:1245px;top:26px;width:23px;height:24px;background:#eceef0;border-left:1px solid #d9dbdd;border-bottom:1px solid #d9dbdd"></div>
<svg class="abs" style="left:1252px;top:33px" width="10" height="10"><path d="M1 1.500h7M1 4.500h7M1 7.500h7" stroke="#999"/></svg>
<div class="abs" style="left:972px;top:53px;width:286px;height:25px;border:1px solid #e2e2e2;background:#fff"></div>
<svg class="abs" style="left:978px;top:59px" width="12" height="12"><circle cx="5" cy="5" r="3.800" fill="none" stroke="#bbb" stroke-width="1.100"/><path d="M8 8l3 3" stroke="#bbb" stroke-width="1.200"/></svg>
<div class="abs" style="left:992px;top:59px;font-size:9.500px;line-height:14px;color:#999">搜索成员</div>

<div class="r" style="top:91px"><svg class="pav" viewBox="0 0 54 54"><use href="#a-xu"/></svg><div class="nm" style="top:5px">徐召清</div><div class="sub">(我)</div><svg class="ic pm"><use href="#pm0"/></svg><svg class="ic pc"><use href="#pc"/></svg></div>
<div class="r" style="top:127px"><svg class="pav" viewBox="0 0 54 54"><use href="#a-js"/></svg><div class="nm" style="top:5px">教室</div><div class="sub">(主持人)</div><svg class="ic pc"><use href="#pc0"/></svg></div>
<div class="r" style="top:164px"><svg class="pav" viewBox="0 0 54 54"><use href="#a-du"/></svg><div class="nm">杜国平</div><svg class="ic pm"><use href="#pmg"/></svg><svg class="ic pc"><use href="#pc"/></svg></div>
<div class="r" style="top:200px"><svg class="pav" viewBox="0 0 54 54"><use href="#a-li"/></svg><div class="nm">4-利丛</div><svg class="ic pm"><use href="#pm"/></svg><svg class="ic pc"><use href="#pc"/></svg></div>
<div class="r" style="top:237px"><div class="pav pbl">G</div><div class="nm">GuihongZhang</div><svg class="ic pm"><use href="#pm"/></svg><svg class="ic pc"><use href="#pc"/></svg></div>
<div class="r" style="top:273px"><svg class="pav" viewBox="0 0 54 54"><use href="#a-ww"/></svg><div class="nm">ww</div><svg class="ic pm"><use href="#pm"/></svg><svg class="ic pc"><use href="#pc"/></svg></div>
<div class="r" style="top:309px"><svg class="pav" viewBox="0 0 54 54"><use href="#a-zm"/></svg><div class="nm">zhoumin</div><svg class="ic pm"><use href="#pm"/></svg><svg class="ic pc"><use href="#pc"/></svg></div>
<div class="r" style="top:346px"><svg class="pav" viewBox="0 0 54 54"><use href="#a-zh"/></svg><div class="nm">ZHUMin</div><svg class="ic pm"><use href="#pm"/></svg><svg class="ic pc"><use href="#pc"/></svg></div>
<div class="r" style="top:382px"><svg class="pav" viewBox="0 0 54 54"><use href="#a-bl"/></svg><div class="nm">本论</div><svg class="ic pm"><use href="#pm"/></svg><svg class="ic pc"><use href="#pc"/></svg></div>
<div class="r" style="top:419px"><div class="pav pbl">缤点</div><div class="nm">缤点</div><svg class="ic pm"><use href="#pm"/></svg><svg class="ic pc"><use href="#pc"/></svg></div>
<div class="r" style="top:455px"><svg class="pav" viewBox="0 0 54 54"><use href="#a-dm"/></svg><div class="nm">邓美林</div><svg class="ic pm"><use href="#pm"/></svg><svg class="ic pc"><use href="#pc"/></svg></div>
<div class="r" style="top:491px"><div class="pav pbl">姜南</div><div class="nm">姜南</div><svg class="ic pm"><use href="#pm"/></svg><svg class="ic pc"><use href="#pc"/></svg></div>
<div class="r" style="top:528px"><svg class="pav" viewBox="0 0 54 54"><use href="#a-oy"/></svg><div class="nm">欧阳文飞</div><svg class="ic pm"><use href="#pm"/></svg><svg class="ic pc"><use href="#pc"/></svg></div>
<div class="r" style="top:564px"><svg class="pav" viewBox="0 0 54 54"><use href="#a-sy"/></svg><div class="nm">三月三</div><svg class="ic pm"><use href="#pm"/></svg><svg class="ic pc"><use href="#pc"/></svg></div>
<div class="r" style="top:601px"><svg class="pav" viewBox="0 0 54 54" style="background:#fff"><use href="#a-tu"/></svg><div class="nm">涂美奇</div><svg class="ic pm"><use href="#pm"/></svg><svg class="ic pc"><use href="#pc"/></svg></div>

<div class="abs" style="left:962px;top:632px;width:306px;height:49px;background:#fff;border-top:1px solid #f2f2f2"></div>
<div class="abs" style="left:1092px;top:649px;width:59px;height:17px;border:1px solid #d0d0d0;border-radius:2px;background:#fff;font-size:10.500px;line-height:15px;text-align:center;color:#333">静音</div>

<!-- tooltip -->
<div class="abs" style="left:1037px;top:141px;width:201px;height:29px;background:#33363c;border-radius:3px"></div>
<svg class="abs" style="left:1044px;top:147px" width="14" height="16"><rect x="4.700" y="1" width="4.800" height="9" rx="2.400" fill="#888"/><path d="M2.800 7.400a4.300 4.300 0 0 0 8.600 0M7 12v2M4.200 14.400h5.600" stroke="#888" stroke-width="1.200" fill="none"/></svg>
<div class="abs" style="left:1066px;top:145px;width:1px;height:22px;background:#44474d"></div>
<div class="abs" style="left:1073px;top:148px;font-size:10.500px;line-height:15px;color:#e4e4e4;white-space:nowrap">正在讲话: 教室; 杜国平;</div>
<svg class="abs" style="left:1160px;top:144px" width="42" height="24"><path d="M8 12l10-10 10 10-10 10z" fill="#4a4c50" opacity=".8"/><path d="M20 12l10-10 10 10-10 10z" fill="#4a4c50" opacity=".7"/></svg>

<!-- sogou IME -->
<div class="abs" style="left:1152px;top:660px;width:116px;height:21px;background:#fff"></div>
<svg class="abs" style="left:1142px;top:655px" width="126" height="27" viewBox="0 0 126 27">
<path d="M4 5l19-3c1 0 2 .5 2 2l3 17c0 1-.5 2-2 2L7 26c-1 0-2-.5-2-2L2 7c0-1 .5-2 2-2z" fill="#f0521c"/>
<path d="M21 8.500l-1 2.500c-3-1.500-8-1.500-8.500.5-.5 2 9 1 9.500 5 .5 4-9 5.500-13 2.500l1-2.500c3 2 9 1.800 9-.2 0-2-9-1-9.500-5C8 7 17 6 21 8.500z" fill="#fff"/>
<path d="M32 8h10v8H32zM37 4.500v16" stroke="#1479d7" stroke-width="1.800" fill="none"/>
<circle cx="55" cy="9" r="1.600" fill="none" stroke="#1479d7"/><path d="M62 10c1 2 0 4-1.500 5" stroke="#1479d7" stroke-width="1.800" fill="none"/>
<rect x="73" y="3" width="5" height="11" rx="2.500" fill="#1479d7"/><path d="M71 10a4.500 4.500 0 0 0 9 0M75.500 15v3M72 19h7" stroke="#1479d7" stroke-width="1.200" fill="none"/>
<rect x="90.500" y="6" width="14" height="11" rx="1" fill="none" stroke="#1479d7" stroke-width="1.300"/><path d="M92.500 9h10M92.500 12h10M92.500 15h10" stroke="#1479d7" stroke-width="1" stroke-dasharray="1.500 1"/>
<rect x="108" y="0" width="18" height="22" fill="#dff1fb"/><circle cx="113.500" cy="7.500" r="3" fill="#7563b5"/><circle cx="120" cy="7.500" r="3" fill="#d25a9c"/><circle cx="113.500" cy="14" r="3" fill="#5662b8"/><circle cx="120" cy="14" r="3" fill="#9a58b0"/>
</svg>

<!-- taskbar -->
<div class="abs" style="left:0;top:681px;width:1268px;height:33px;background:#d9d4d3"></div>
<svg class="abs" style="left:13px;top:690px" width="14" height="14"><g fill="#000"><path d="M0 2l6-1v5.500H0zM7 .8L14 0v6.500H7zM0 7.500h6V13L0 12zM7 7.500h7V14l-7-1z"/></g></svg>
<div class="abs" style="left:41px;top:682px;width:282px;height:31px;background:#fff"></div>
<svg class="abs" style="left:49px;top:690px" width="15" height="15"><circle cx="9" cy="6" r="4.700" fill="none" stroke="#222" stroke-width="1.100"/><path d="M5.500 9.500L1 14" stroke="#222" stroke-width="1.200"/></svg>
<div class="abs" style="left:73px;top:690px;font-size:12.500px;line-height:16px;color:#444;white-space:nowrap">在这里输入你要搜索的内容</div>
<svg class="abs" style="left:336px;top:690px" width="15" height="15"><circle cx="7.500" cy="7.500" r="5.300" fill="none" stroke="#111" stroke-width="1.800"/></svg>
<svg class="abs" style="left:375px;top:690px" width="16" height="15"><path d="M1 1.500h8M1 13.500h8" stroke="#222" stroke-width="1.200"/><rect x="1.500" y="4" width="7.500" height="7" fill="none" stroke="#222" stroke-width="1.100"/><path d="M13 1v2M13 5.500v8" stroke="#222" stroke-width="1.200"/></svg>
<svg class="abs" style="left:415px;top:688px" width="20" height="18"><path d="M1 2h7l2 2h9v12H1z" fill="#f3c84a"/><rect x="1" y="6" width="18" height="10" fill="#f8d771"/><path d="M5 12h10l-1 4H6z" fill="#2c8cd8"/><rect x="8" y="11" width="4" height="5" fill="#125b9c"/></svg>
<div class="und" style="left:409px;width:33px"></div>
<div class="abs" style="left:446px;top:681px;width:40px;height:30px;background:#ebe7e7"></div>
<svg class="abs" style="left:457px;top:688px" width="18" height="18"><rect width="18" height="18" rx="3" fill="#0a6cff"/><path d="M2 12l4-5 3 3 3-4 4 6H12l-3-3-2 3z" fill="#fff"/></svg>
<div class="und" style="left:446px;width:40px"></div>
<svg class="abs" style="left:497px;top:687px" width="20" height="20"><rect width="20" height="20" rx="4" fill="#e57a2b"/><path d="M3 14L14 4M9 16l8-9" stroke="#fbe7cf" stroke-width="1.500"/><path d="M5 8l6 6" stroke="#fbe7cf"/></svg>
<div class="und" style="left:491px;width:33px"></div>
<div class="abs" style="left:538px;top:688px;width:20px;height:19px;background:#f60a25;border-radius:3px;color:#fff;font-size:6.500px;line-height:19px;text-align:center;white-space:nowrap">有道</div>
<div class="und" style="left:532px;width:33px"></div>
<svg class="abs" style="left:579px;top:688px" width="22" height="19"><ellipse cx="8" cy="8" rx="7.500" ry="6.500" fill="#3fd04d"/><ellipse cx="14.500" cy="13" rx="6" ry="5" fill="#f0f0f0"/><circle cx="12.500" cy="12.500" r=".9" fill="#888"/><circle cx="16.500" cy="12.500" r=".9" fill="#888"/></svg>
<div class="und" style="left:573px;width:33px"></div>
<svg class="abs" style="left:790px;top:688px" width="42" height="18"><path d="M3 1v4M8 1v4" stroke="#fff" stroke-width="1.300"/><path d="M1.500 5h8v5c0 2-2 3-3 3v4h-2v-4c-1 0-3-1-3-3z" fill="#fff" stroke="#999" stroke-width=".5"/><rect x="11.500" y="1.500" width="27" height="14" rx="2" fill="#eee" stroke="#9a9a9a"/><rect x="13.500" y="3" width="23" height="11" fill="#1f9448"/><rect x="39" y="5" width="2" height="7" fill="#9a9a9a"/></svg>
<div class="abs" style="left:803px;top:691px;width:27px;text-align:center;font-size:8.500px;line-height:12px;color:#e8f5ea">97%</div>
<svg class="abs" style="left:903px;top:689px" width="20" height="16"><ellipse cx="12" cy="8" rx="7" ry="6" fill="#b9dbf4"/><ellipse cx="6" cy="11" rx="5.500" ry="4" fill="#d9ecfa"/></svg>
<div class="abs" style="left:930px;top:689px;font-size:12.500px;line-height:16px;color:#333;white-space:nowrap">16°C 多云</div>
<svg class="abs" style="left:1000px;top:688px" width="130" height="18"><path d="M1 12l5-5 5 5" fill="none" stroke="#333" stroke-width="1.100"/><path d="M19 13c-2 0-3-1-3-2.500s1.500-2.500 3-2.500c1-2 5-3 7-1 3 0 4 2 4 3.500S29 13 27 13z" fill="#b7b3b2" stroke="#333" stroke-width=".9"/><rect x="42" y="2" width="6" height="10" rx="3" fill="#111"/><path d="M41 9a4 4 0 0 0 8 0M45 13v3M42 16.500h6" stroke="#111" stroke-width="1" fill="none"/><rect x="60" y="6" width="12" height="8" fill="#222"/><path d="M58 4l3 2" stroke="#222" stroke-width="1.500"/><path d="M80 15a10 10 0 0 1 10-10M83 15a7 7 0 0 1 7-7M86 15a4 4 0 0 1 4-4" fill="none" stroke="#777" stroke-width="1"/><path d="M98 7h2.500l3.500-3v11l-3.500-3H98z" fill="none" stroke="#333"/><path d="M106 6c1 2 1 5 0 7M109 4c2 3 2 8 0 11" fill="none" stroke="#777"/><path d="M119 3v14" stroke="#777"/><rect x="115" y="6" width="8" height="7" fill="none" stroke="#777"/></svg>
<svg class="abs" style="left:1140px;top:689px" width="16" height="15"><rect x="1" y="1" width="13" height="13" rx="3" fill="#ee5a1e" transform="rotate(-8 7 7)"/><path d="M11 4.500C9 3.500 5 4 5 5.500s6 1 6 3.500-4.500 3-6.500 1.500" fill="none" stroke="#fff" stroke-width="1.500"/></svg>
<div class="abs" style="left:1159px;top:684px;width:68px;text-align:center;font-size:11px;line-height:14px;color:#333">19:26</div>
<div class="abs" style="left:1160px;top:699px;width:68px;text-align:center;font-size:11px;line-height:14px;color:#333">2021/11/4</div>
<svg class="abs" style="left:1233px;top:690px" width="16" height="15"><path d="M1.500 1.500h13v10H10L8 14l-2-2.500H1.500z" fill="none" stroke="#222" stroke-width="1"/></svg>
</body></html>
